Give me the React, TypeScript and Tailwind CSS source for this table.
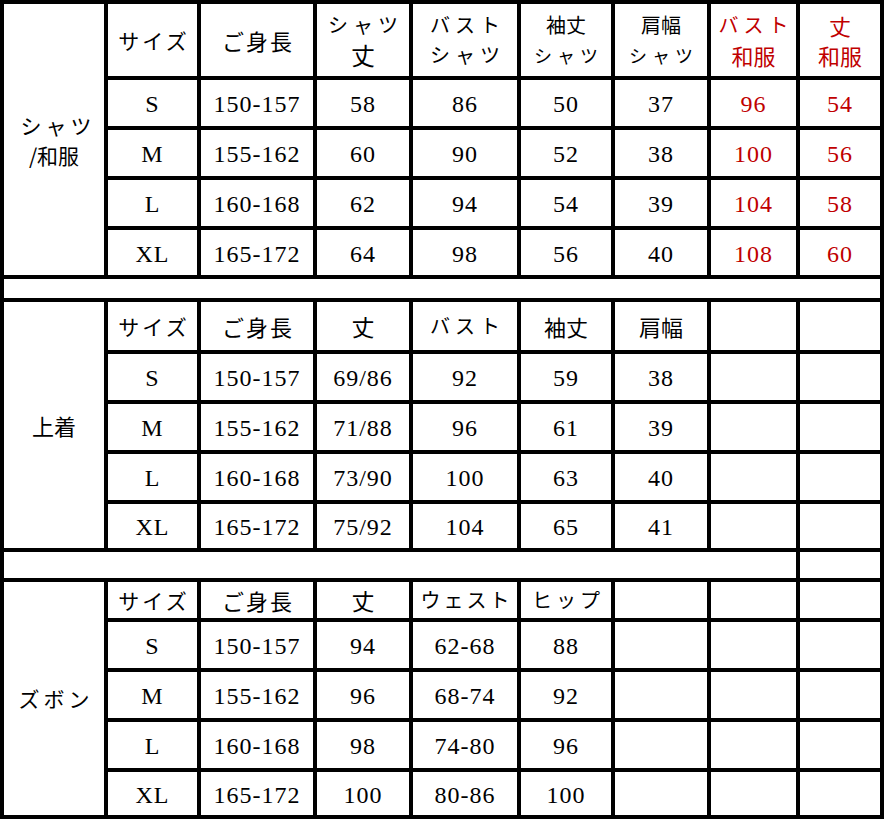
const jp = "font-['Noto_Sans_CJK_JP',sans-serif]";
const num = "font-['Liberation_Serif',serif] text-[24px] tracking-[1px]";
const red = "text-[#c00000]";

type Row = { size: string; values: string[]; red?: string[] };

const shirtRows: Row[] = [
  { size: "S", values: ["150-157", "58", "86", "50", "37"], red: ["96", "54"] },
  { size: "M", values: ["155-162", "60", "90", "52", "38"], red: ["100", "56"] },
  { size: "L", values: ["160-168", "62", "94", "54", "39"], red: ["104", "58"] },
  { size: "XL", values: ["165-172", "64", "98", "56", "40"], red: ["108", "60"] },
];

const jacketRows: Row[] = [
  { size: "S", values: ["150-157", "69/86", "92", "59", "38"] },
  { size: "M", values: ["155-162", "71/88", "96", "61", "39"] },
  { size: "L", values: ["160-168", "73/90", "100", "63", "40"] },
  { size: "XL", values: ["165-172", "75/92", "104", "65", "41"] },
];

const pantsRows: Row[] = [
  { size: "S", values: ["150-157", "94", "62-68", "88"] },
  { size: "M", values: ["155-162", "96", "68-74", "92"] },
  { size: "L", values: ["160-168", "98", "74-80", "96"] },
  { size: "XL", values: ["165-172", "100", "80-86", "100"] },
];

const Cell = ({ children, className = "" }: { children?: React.ReactNode; className?: string }) => (
  <div className={`bg-white flex flex-col items-center justify-center ${className}`}>
    {children}
  </div>
);

const DataRows = ({ rows }: { rows: Row[] }) => (
  <>
    {rows.map((row) => {
      const blanks = 8 - 1 - row.values.length - (row.red?.length ?? 0);
      return (
        <div key={row.size} className="contents">
          <Cell className={`${num} pt-[2px]`}>{row.size}</Cell>
          {row.values.map((v, i) => (
            <Cell key={i} className={`${num} pt-[2px]`}>{v}</Cell>
          ))}
          {row.red?.map((v, i) => (
            <Cell key={"r" + i} className={`${num} ${red} pt-[2px]`}>{v}</Cell>
          ))}
          {Array.from({ length: blanks }).map((_, i) => (
            <Cell key={"b" + i} />
          ))}
        </div>
      );
    })}
  </>
);

const Head = ({ top, bottom, className = "text-[21px]" }: { top: string; bottom?: string; className?: string }) => (
  <Cell className={`${jp} ${className} leading-[30px]`}>
    <span>{top}</span>
    {bottom && <span>{bottom}</span>}
  </Cell>
);

export default function App() {
  return (
    <div className="w-[884px] h-[819px] bg-black text-black p-[4px] grid gap-[4px] grid-cols-[100px_89px_112px_92px_104px_90px_92px_85px_80px] grid-rows-[72px_46px_46px_46px_45px_19px_48px_46px_46px_46px_44px_26px_36px_46px_46px_46px_43px]">
      {/* シャツ / 和服 */}
      <Cell className={`row-span-5 ${jp} text-[21px] leading-[30px]`}>
        <span className="tracking-[4px] pl-[8px]">シャツ</span>
        <span>/和服</span>
      </Cell>
      <Head top="サイズ" className="text-[21px] tracking-[3px] pl-[3px]" />
      <Head top="ご身長" className="text-[22px] tracking-[2px] pl-[2px]" />
      <Cell className={`${jp} leading-[30px]`}>
        <span className="text-[20px] tracking-[5px] pl-[5px]">シャツ</span>
        <span className="text-[24px]">丈</span>
      </Cell>
      <Head top="バスト" bottom="シャツ" className="text-[20px] tracking-[5px] pl-[5px]" />
      <Cell className={`${jp} leading-[30px]`}>
        <span className="text-[20px]">袖丈</span>
        <span className="text-[18px] tracking-[5px] pl-[5px]">シャツ</span>
      </Cell>
      <Cell className={`${jp} leading-[30px]`}>
        <span className="text-[20px]">肩幅</span>
        <span className="text-[18px] tracking-[5px] pl-[5px]">シャツ</span>
      </Cell>
      <Cell className={`${jp} ${red} leading-[30px]`}>
        <span className="text-[20px] tracking-[5px] pl-[5px]">バスト</span>
        <span className="text-[22px]">和服</span>
      </Cell>
      <Cell className={`${jp} ${red} leading-[30px] text-[22px]`}>
        <span>丈</span>
        <span>和服</span>
      </Cell>
      <DataRows rows={shirtRows} />

      <Cell className="col-span-9" />

      {/* 上着 */}
      <Cell className={`row-span-5 ${jp} text-[22px]`}>上着</Cell>
      <Head top="サイズ" className="text-[21px] tracking-[3px] pl-[3px]" />
      <Head top="ご身長" className="text-[22px] tracking-[2px] pl-[2px]" />
      <Head top="丈" className="text-[23px]" />
      <Head top="バスト" className="text-[20px] tracking-[5px] pl-[5px]" />
      <Head top="袖丈" className="text-[22px]" />
      <Head top="肩幅" className="text-[22px]" />
      <Cell />
      <Cell />
      <DataRows rows={jacketRows} />

      <Cell className="col-span-8" />
      <Cell />

      {/* ズボン */}
      <Cell className={`row-span-5 ${jp} text-[21px] tracking-[4px] pl-[4px]`}>ズボン</Cell>
      <Head top="サイズ" className="text-[21px] tracking-[3px] pl-[3px]" />
      <Head top="ご身長" className="text-[22px] tracking-[2px] pl-[2px]" />
      <Head top="丈" className="text-[23px]" />
      <Head top="ウェスト" className="text-[20px] tracking-[3px] pl-[3px]" />
      <Head top="ヒップ" className="text-[20px] tracking-[4px] pl-[4px]" />
      <Cell />
      <Cell />
      <Cell />
      <DataRows rows={pantsRows} />
    </div>
  );
}
